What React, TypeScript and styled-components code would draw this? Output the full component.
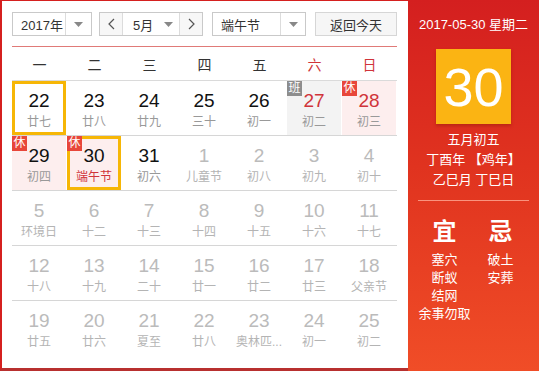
import React from "react";
import styled, { createGlobalStyle } from "styled-components";

const Global = createGlobalStyle`
  html, body { margin: 0; padding: 0; background: #fff; }
  body { font-family: "Liberation Sans", Arial, "Noto Sans CJK SC", sans-serif; }
`;

const Frame = styled.div`
  width: 539px;
  height: 371px;
  display: flex;
  overflow: hidden;
`;

const Left = styled.div`
  width: 408px;
  box-sizing: border-box;
  border-left: 2px solid #d5201f;
  border-top: 1px solid #d5201f;
  border-bottom: 3px solid #b8302f;
  padding: 11px 11px 0 10px;
  background: #fff;
`;

const Toolbar = styled.div`
  display: flex;
  height: 24px;
  gap: 7px;
`;

const Box = styled.div<{ $w: number; $gap?: number }>`
  width: ${(p) => p.$w}px;
  margin-left: ${(p) => p.$gap || 0}px;
  box-sizing: border-box;
  height: 24px;
  border: 1px solid #c9c9c9;
  display: flex;
  align-items: stretch;
  background: #fff;
  font-size: 13px;
  color: #333;
`;

const Label = styled.div<{ $pad?: number }>`
  flex: 1;
  display: flex;
  align-items: center;
  padding-left: ${(p) => p.$pad ?? 8}px;
`;

const ArrowCell = styled.div<{ $w: number; $line?: boolean }>`
  width: ${(p) => p.$w}px;
  display: flex;
  align-items: center;
  justify-content: center;
  border-left: ${(p) => (p.$line ? "1px solid #dcdcdc" : "none")};
`;

const NavBtn = styled.div<{ $side: "l" | "r" }>`
  width: 22px;
  display: flex;
  align-items: center;
  justify-content: center;
  background: #f7f7f7;
  ${(p) => (p.$side === "l" ? "border-right: 1px solid #dcdcdc;" : "border-left: 1px solid #dcdcdc;")}
`;

const TodayBtn = styled.div`
  margin-left: 2px;
  width: 82px;
  height: 24px;
  box-sizing: border-box;
  border: 1px solid #d6d6d6;
  background: #f6f6f6;
  font-size: 13px;
  color: #333;
  display: flex;
  align-items: center;
  justify-content: center;
`;

const RedRule = styled.div`
  height: 1px;
  background: #e07a78;
  margin-top: 10px;
`;

const WeekHead = styled.div`
  display: grid;
  grid-template-columns: repeat(7, 1fr);
  height: 33px;
  border-bottom: 1px solid #dadada;
`;

const WeekDay = styled.div<{ $red?: boolean }>`
  display: flex;
  align-items: center;
  justify-content: center;
  font-size: 14px;
  color: ${(p) => (p.$red ? "#d0343a" : "#333")};
`;

const Row = styled.div<{ $last?: boolean }>`
  display: grid;
  grid-template-columns: repeat(7, 54px);
  column-gap: 1px;
  height: 54px;
  border-bottom: ${(p) => (p.$last ? "none" : "1px solid #d6d6d6")};
`;

type Kind = "normal" | "rest" | "work" | "other";

const Cell = styled.div<{ $kind: Kind; $sel?: boolean }>`
  position: relative;
  box-sizing: border-box;
  background: ${(p) =>
    p.$kind === "rest" ? "#fdeeee" : p.$kind === "work" ? "#f3f3f3" : "#fff"};
  border: ${(p) => (p.$sel ? "3px solid #f6b606" : "3px solid transparent")};
  display: flex;
  flex-direction: column;
  align-items: center;
  padding-top: 6px;
`;

const Num = styled.div<{ $c: string }>`
  font-size: 19px;
  line-height: 21px;
  color: ${(p) => p.$c};
`;

const Lunar = styled.div<{ $c: string }>`
  font-size: 12px;
  line-height: 16px;
  margin-top: 3px;
  color: ${(p) => p.$c};
  white-space: nowrap;
`;

const Badge = styled.div<{ $work?: boolean }>`
  position: absolute;
  left: -3px;
  top: -3px;
  width: 15px;
  height: 15px;
  background: ${(p) => (p.$work ? "#8d8d8d" : "#e8463a")};
  color: #fff;
  font-size: 12px;
  line-height: 15px;
  text-align: center;
`;

const Panel = styled.div`
  width: 131px;
  background: linear-gradient(180deg, #d41f1f 0%, #e0331f 45%, #f04d27 100%);
  color: #fff;
  display: flex;
  flex-direction: column;
  align-items: center;
`;

const DateLine = styled.div`
  margin-top: 17px;
  font-size: 13px;
  line-height: 16px;
`;

const BigDay = styled.div`
  margin-top: 16px;
  width: 75px;
  height: 75px;
  background: #fbb413;
  box-shadow: 0 2px 3px rgba(120, 20, 0, 0.35);
  display: flex;
  align-items: center;
  justify-content: center;
  font-size: 54px;
  color: #fff;
`;

const LunarInfo = styled.div`
  margin-top: 6px;
  font-size: 13px;
  line-height: 20px;
  text-align: center;
`;

const Sep = styled.div`
  width: 111px;
  height: 1px;
  background: rgba(255, 170, 150, 0.8);
  margin-top: 10px;
`;

const YiJi = styled.div`
  display: grid;
  grid-template-columns: 56px 56px;
  margin-top: 17px;
  margin-left: -2px;
`;

const YiCol = styled.div`
  display: flex;
  flex-direction: column;
  align-items: center;
`;

const YiHead = styled.div`
  font-size: 24px;
  font-weight: bold;
  line-height: 28px;
  margin-bottom: 5px;
`;

const YiItem = styled.div`
  font-size: 13px;
  line-height: 18px;
  white-space: nowrap;
`;

const Tri = () => (
  <svg width="9" height="5" viewBox="0 0 9 5">
    <path d="M0 0 L9 0 L4.5 5 Z" fill="#888" />
  </svg>
);

const Chev = ({ dir }: { dir: "l" | "r" }) => (
  <svg width="7" height="12" viewBox="0 0 7 12">
    <path
      d={dir === "l" ? "M6 1 L1 6 L6 11" : "M1 1 L6 6 L1 11"}
      fill="none"
      stroke="#555"
      strokeWidth="1.2"
    />
  </svg>
);

type Day = { n: number; l: string; kind?: Kind; badge?: "休" | "班"; sel?: boolean; red?: boolean; hol?: boolean };

const weeks: Day[][] = [
  [
    { n: 22, l: "廿七", sel: true },
    { n: 23, l: "廿八" },
    { n: 24, l: "廿九" },
    { n: 25, l: "三十" },
    { n: 26, l: "初一" },
    { n: 27, l: "初二", kind: "work", badge: "班", red: true },
    { n: 28, l: "初三", kind: "rest", badge: "休", red: true },
  ],
  [
    { n: 29, l: "初四", kind: "rest", badge: "休" },
    { n: 30, l: "端午节", kind: "rest", badge: "休", sel: true, hol: true },
    { n: 31, l: "初六" },
    { n: 1, l: "儿童节", kind: "other" },
    { n: 2, l: "初八", kind: "other" },
    { n: 3, l: "初九", kind: "other" },
    { n: 4, l: "初十", kind: "other" },
  ],
  [
    { n: 5, l: "环境日", kind: "other" },
    { n: 6, l: "十二", kind: "other" },
    { n: 7, l: "十三", kind: "other" },
    { n: 8, l: "十四", kind: "other" },
    { n: 9, l: "十五", kind: "other" },
    { n: 10, l: "十六", kind: "other" },
    { n: 11, l: "十七", kind: "other" },
  ],
  [
    { n: 12, l: "十八", kind: "other" },
    { n: 13, l: "十九", kind: "other" },
    { n: 14, l: "二十", kind: "other" },
    { n: 15, l: "廿一", kind: "other" },
    { n: 16, l: "廿二", kind: "other" },
    { n: 17, l: "廿三", kind: "other" },
    { n: 18, l: "父亲节", kind: "other" },
  ],
  [
    { n: 19, l: "廿五", kind: "other" },
    { n: 20, l: "廿六", kind: "other" },
    { n: 21, l: "夏至", kind: "other" },
    { n: 22, l: "廿八", kind: "other" },
    { n: 23, l: "奥林匹...", kind: "other" },
    { n: 24, l: "初一", kind: "other" },
    { n: 25, l: "初二", kind: "other" },
  ],
];

const heads = ["一", "二", "三", "四", "五", "六", "日"];

export default function App() {
  return (
    <>
      <Global />
      <Frame>
        <Left>
          <Toolbar>
            <Box $w={80}>
              <Label>2017年</Label>
              <ArrowCell $w={25} $line>
                <Tri />
              </ArrowCell>
            </Box>
            <Box $w={104}>
              <NavBtn $side="l">
                <Chev dir="l" />
              </NavBtn>
              <Label $pad={10}>5月</Label>
              <ArrowCell $w={22}>
                <Tri />
              </ArrowCell>
              <NavBtn $side="r">
                <Chev dir="r" />
              </NavBtn>
            </Box>
            <Box $w={94} $gap={2}>
              <Label>端午节</Label>
              <ArrowCell $w={24} $line>
                <Tri />
              </ArrowCell>
            </Box>
            <TodayBtn>返回今天</TodayBtn>
          </Toolbar>
          <RedRule />
          <WeekHead>
            {heads.map((h, i) => (
              <WeekDay key={h} $red={i >= 5}>
                {h}
              </WeekDay>
            ))}
          </WeekHead>
          {weeks.map((w, wi) => (
            <Row key={wi} $last={wi === weeks.length - 1}>
              {w.map((d, di) => {
                const kind = d.kind || "normal";
                const numColor = kind === "other" ? "#bbb" : d.red ? "#d0343a" : "#111";
                const lunColor = d.hol ? "#d0343a" : kind === "other" ? "#b4b4b4" : "#999";
                return (
                  <Cell key={di} $kind={kind} $sel={d.sel}>
                    {d.badge && <Badge $work={d.badge === "班"}>{d.badge}</Badge>}
                    <Num $c={numColor}>{d.n}</Num>
                    <Lunar $c={lunColor}>{d.l}</Lunar>
                  </Cell>
                );
              })}
            </Row>
          ))}
        </Left>
        <Panel>
          <DateLine>2017-05-30 星期二</DateLine>
          <BigDay>30</BigDay>
          <LunarInfo>
            五月初五
            <br />
            丁酉年 【鸡年】
            <br />
            乙巳月 丁巳日
          </LunarInfo>
          <Sep />
          <YiJi>
            <YiCol>
              <YiHead>宜</YiHead>
              <YiItem>塞穴</YiItem>
              <YiItem>断蚁</YiItem>
              <YiItem>结网</YiItem>
              <YiItem>余事勿取</YiItem>
            </YiCol>
            <YiCol>
              <YiHead>忌</YiHead>
              <YiItem>破土</YiItem>
              <YiItem>安葬</YiItem>
            </YiCol>
          </YiJi>
        </Panel>
      </Frame>
    </>
  );
}
